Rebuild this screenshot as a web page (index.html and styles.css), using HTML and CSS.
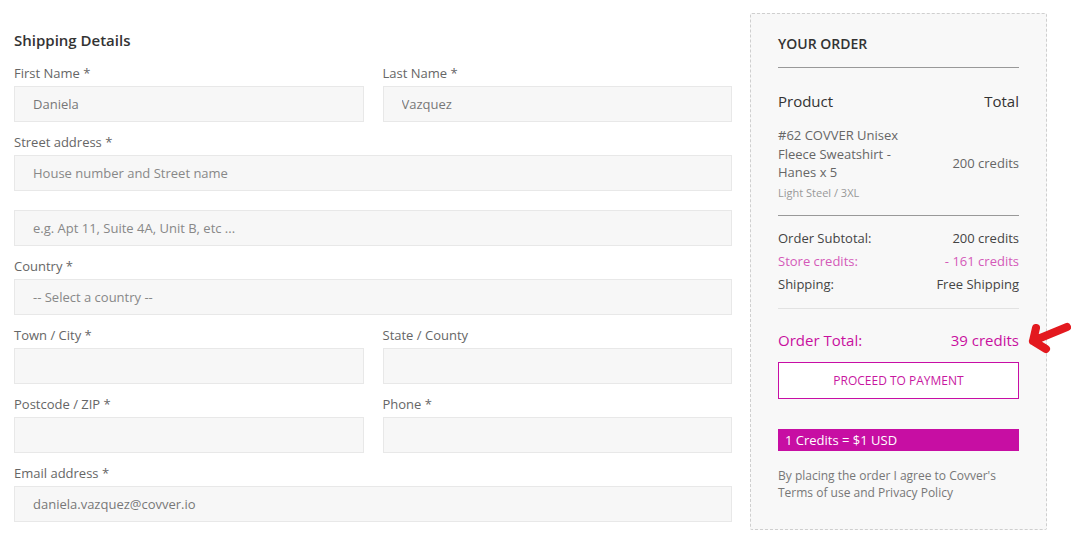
FILE: index.html
```html
<!DOCTYPE html>
<html lang="en">
<head>
    <meta charset="UTF-8">
    <meta name="viewport" content="width=device-width, initial-scale=1.0">
    <title>Checkout</title>
    <link rel="stylesheet" href="styles.css">
</head>
<body>
    <div class="checkout">
        <form class="shipping">
            <h2 class="title">Shipping Details</h2>

            <div class="row">
                <div class="field">
                    <label>First Name *</label>
                    <input class="input" type="text" value="Daniela">
                </div>
                <div class="field">
                    <label>Last Name *</label>
                    <input class="input" type="text" value="Vazquez">
                </div>
            </div>

            <div class="field">
                <label>Street address *</label>
                <input class="input" type="text" placeholder="House number and Street name">
            </div>
            <div class="field no-label">
                <input class="input" type="text" placeholder="e.g. Apt 11, Suite 4A, Unit B, etc ...">
            </div>

            <div class="field">
                <label>Country *</label>
                <div class="input select">-- Select a country --</div>
            </div>

            <div class="row">
                <div class="field">
                    <label>Town / City *</label>
                    <input class="input" type="text">
                </div>
                <div class="field">
                    <label>State / County</label>
                    <input class="input" type="text">
                </div>
            </div>

            <div class="row">
                <div class="field">
                    <label>Postcode / ZIP *</label>
                    <input class="input" type="text">
                </div>
                <div class="field">
                    <label>Phone *</label>
                    <input class="input" type="text">
                </div>
            </div>

            <div class="field">
                <label>Email address *</label>
                <input class="input" type="text" value="daniela.vazquez@covver.io">
            </div>
        </form>

        <div class="order">
            <h3 class="order-title">YOUR ORDER</h3>

            <div class="line head">
                <span>Product</span>
                <span>Total</span>
            </div>

            <div class="product">
                <div class="product-info">
                    <div class="product-name">#62 COVVER Unisex Fleece Sweatshirt - Hanes x 5</div>
                    <div class="variant">Light Steel / 3XL</div>
                </div>
                <div class="product-price">200 credits</div>
            </div>

            <div class="totals">
                <div class="line"><span>Order Subtotal:</span><span>200 credits</span></div>
                <div class="line credits"><span>Store credits:</span><span>- 161 credits</span></div>
                <div class="line"><span>Shipping:</span><span>Free Shipping</span></div>
            </div>

            <div class="line grand">
                <span>Order Total:</span>
                <span>39 credits</span>
            </div>

            <button class="pay-btn">PROCEED TO PAYMENT</button>

            <div class="rate">1 Credits = $1 USD</div>

            <p class="terms">By placing the order I agree to Covver's Terms of use and Privacy Policy</p>

            <svg class="arrow" width="50" height="36" viewBox="0 0 50 36">
                <path d="M44 8 L10 22 M10 22 L13 9 M10 22 L23 30" fill="none" stroke="#e3191f" stroke-width="8" stroke-linecap="round" stroke-linejoin="round"/>
            </svg>
        </div>
    </div>
</body>
</html>
```

FILE: styles.css
```css
body {
    margin: 0;
    background-color: #fff;
    font-family: "Open Sans", Arial, sans-serif;
    color: #555;
}

.checkout {
    display: flex;
    align-items: flex-start;
    gap: 18px;
    padding: 13px 0 0 14px;
}

.shipping {
    width: 718px;
    padding-top: 17px;
}

.title {
    margin: 0 0 13px;
    font-size: 15px;
    line-height: 20px;
    font-weight: 600;
    color: #333;
}

.row {
    display: flex;
    gap: 19px;
}

.row .field {
    flex: 1;
}

.field {
    margin-bottom: 10px;
}

.field label {
    display: block;
    font-size: 13px;
    line-height: 20px;
    color: #666;
    margin-bottom: 3px;
}

.field.no-label {
    margin-top: 19px;
    margin-bottom: 10px;
}

.input {
    display: block;
    box-sizing: border-box;
    width: 100%;
    height: 36px;
    padding: 0 18px;
    background-color: #f7f7f7;
    border: 1px solid #e8e8e8;
    font-family: inherit;
    font-size: 13px;
    color: #777;
    outline: none;
}

.input::placeholder {
    color: #888;
}

.select {
    line-height: 34px;
    color: #888;
}

.order {
    position: relative;
    box-sizing: border-box;
    width: 297px;
    padding: 20px 27px 28px;
    background-color: #f8f8f8;
    border: 1px dashed #cfcfcf;
    border-radius: 2px;
}

.order-title {
    margin: 0;
    padding-bottom: 13px;
    border-bottom: 1px solid #999;
    font-size: 14px;
    line-height: 20px;
    font-weight: 600;
    color: #333;
}

.line {
    display: flex;
    justify-content: space-between;
    font-size: 13px;
    line-height: 23px;
    color: #444;
}

.line.head {
    margin-top: 22px;
    font-size: 15px;
    line-height: 22px;
    color: #333;
}

.product {
    display: flex;
    align-items: center;
    justify-content: space-between;
    margin-top: 14px;
    padding-bottom: 14px;
    border-bottom: 1px solid #999;
}

.product-info {
    width: 135px;
}

.product-name {
    font-size: 13px;
    line-height: 18.5px;
    color: #666;
}

.variant {
    margin-top: 3px;
    font-size: 11px;
    line-height: 16px;
    color: #999;
}

.product-price {
    font-size: 13px;
    color: #666;
}

.totals {
    margin-top: 11px;
    padding-bottom: 12px;
    border-bottom: 1px solid #e2e2e2;
}

.line.credits {
    color: #d45ab8;
}

.line.grand {
    margin-top: 20px;
    font-size: 15px;
    line-height: 22px;
    color: #c8109f;
}

.pay-btn {
    display: block;
    width: 100%;
    height: 37px;
    margin-top: 11px;
    background-color: #fff;
    border: 1px solid #c70ea5;
    font-family: inherit;
    font-size: 12px;
    color: #c8179f;
    cursor: pointer;
}

.rate {
    margin-top: 30px;
    padding: 0 7px;
    background-color: #c70ea3;
    color: #fff;
    font-size: 13px;
    line-height: 22px;
}

.terms {
    margin: 16px 0 0;
    font-size: 12px;
    line-height: 17px;
    color: #777;
}

.arrow {
    position: absolute;
    right: -27px;
    top: 305px;
}
```
